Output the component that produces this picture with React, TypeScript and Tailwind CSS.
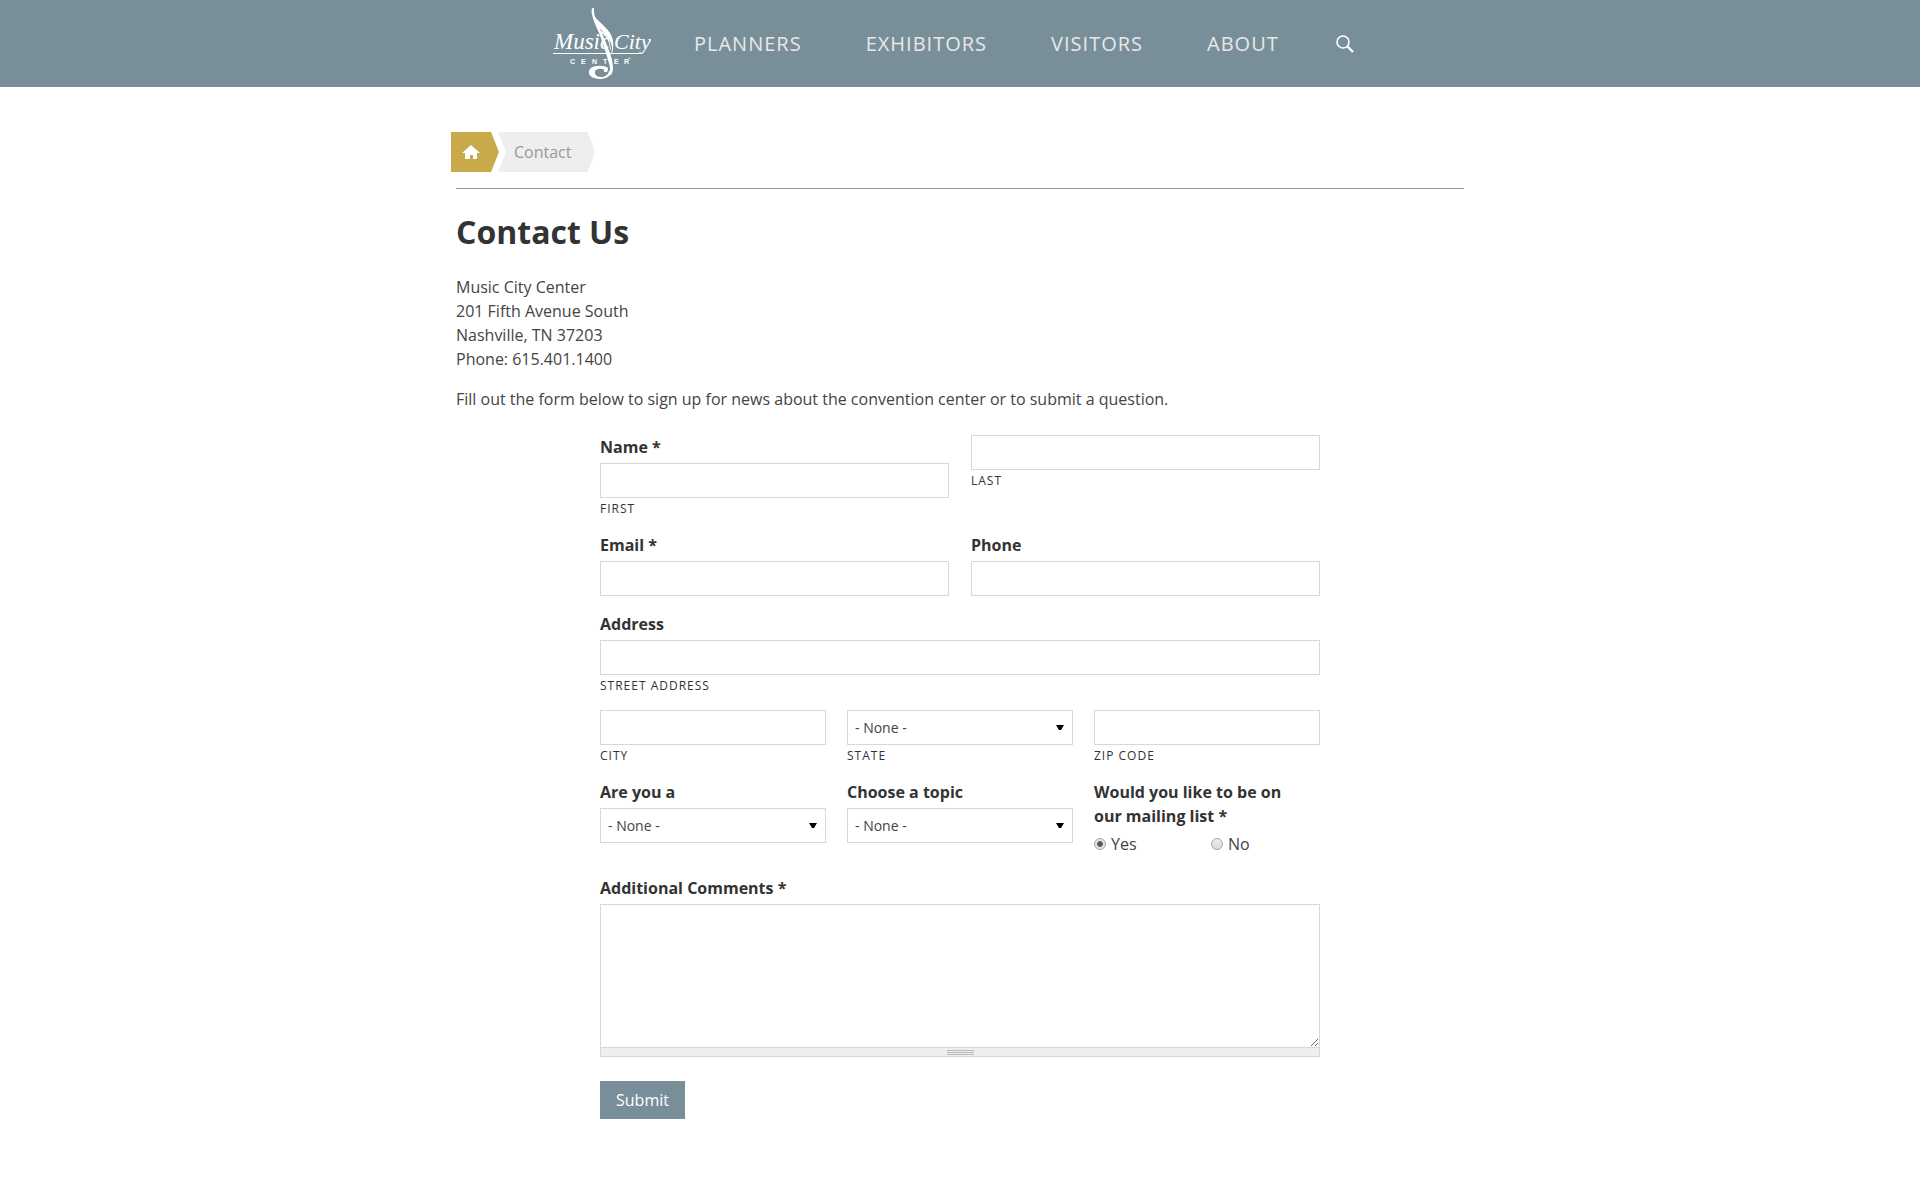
import type { ReactNode } from 'react'

interface TextFieldProps {
  id: string
  label?: string
  caption?: string
}

interface SelectFieldProps {
  id: string
  label?: string
  caption?: string
}

const NAV_LINKS = ['Planners', 'Exhibitors', 'Visitors', 'About']

const LOGO_LETTERS = [
  { letter: 'C', x: 17 },
  { letter: 'E', x: 28 },
  { letter: 'N', x: 39 },
  { letter: 'T', x: 50 },
  { letter: 'E', x: 61 },
  { letter: 'R', x: 71 },
]

function Logo() {
  return (
    <svg className="w-[98px] h-[87px]" viewBox="0 0 98 87" fill="#fff" role="img" aria-label="Music City Center">
      <text x="1" y="49" fontFamily="'Liberation Serif', serif" fontStyle="italic" fontSize="23">Music</text>
      <text x="61" y="49" fontFamily="'Liberation Serif', serif" fontStyle="italic" fontSize="22">City</text>
      <path d="M0 53.500H87" stroke="#fff" strokeWidth="1" />
      {LOGO_LETTERS.map((item) => (
        <text key={item.x} x={item.x} y="64" fontFamily="'Liberation Sans', sans-serif" fontWeight="700" fontSize="7">{item.letter}</text>
      ))}
      <text x="75" y="60" fontFamily="'Liberation Sans', sans-serif" fontSize="4">®</text>
      {/* note stem */}
      <path d="M39 8.500C37 13 42 24 46 33C50 43 53 53 55 60C57 66 58 70 56 74L58 75C61 71 60 66 59 60C57 52 53 42 49 33C45 24 40 15 41 8.500C41 7.500 40 7.500 39 8.500Z" />
      {/* note head */}
      <path d="M55 68C51 65 40 65 37 69C33 75 40 79 47 79C53 79 58 76 59 71L56 71C55 75 52 77 48 77C41 77 40 70 45 69C49 68 52 69 51 72L54 72C55 70 55 69 55 68Z" />
      {/* flag */}
      <path d="M39 11C40 18 52 25 57 33C61 39 61 48 59 54C60 45 57 39 52 34C47 29 41 23 39 11Z" />
      <path d="M47 31C52 32 56 37 57 44C58 48 58 51 60 55C56 49 57 42 53 37C51 35 49 33 47 31Z" />
    </svg>
  )
}

function Label(props: { htmlFor: string; children: ReactNode }) {
  return <label htmlFor={props.htmlFor} className="block mb-1 font-bold leading-6">{props.children}</label>
}

function Caption(props: { htmlFor: string; children: ReactNode }) {
  return <label htmlFor={props.htmlFor} className="block pt-0.5 text-xs leading-[17px] tracking-[1px] uppercase">{props.children}</label>
}

function TextField(props: TextFieldProps) {
  return (
    <div>
      {props.label && <Label htmlFor={props.id}>{props.label}</Label>}
      <input id={props.id} type="text" className="block w-full h-[35px] px-2 border border-[#d8d8d8] bg-white text-sm" />
      {props.caption && <Caption htmlFor={props.id}>{props.caption}</Caption>}
    </div>
  )
}

function SelectField(props: SelectFieldProps) {
  return (
    <div>
      {props.label && <Label htmlFor={props.id}>{props.label}</Label>}
      <div className="relative">
        <select id={props.id} className="block w-full h-[35px] px-[7px] border border-[#d8d8d8] bg-white text-sm text-[#444] appearance-none">
          <option>- None -</option>
        </select>
        <svg className="absolute right-[9px] top-[15px] w-2 h-[5px] pointer-events-none" viewBox="0 0 8 5">
          <path d="M0 0H8L5 5H3Z" fill="#000" />
        </svg>
      </div>
      {props.caption && <Caption htmlFor={props.id}>{props.caption}</Caption>}
    </div>
  )
}

function Radio(props: { label: string; checked?: boolean }) {
  return (
    <label className="flex items-center gap-[5px] w-[117px]">
      <input
        type="radio"
        name="mailing"
        defaultChecked={props.checked}
        className="w-3 h-3 rounded-full border border-[#a6a6a6] bg-linear-to-b from-[#eee] to-[#d9d9d9] appearance-none checked:bg-radial checked:from-[#5a5a5a] checked:from-35% checked:to-[#e2e2e2] checked:to-45%"
      />
      {props.label}
    </label>
  )
}

export default function App() {
  return (
    <div className="min-h-screen bg-white font-['Open_Sans',sans-serif] text-base text-[#333]">
      <header className="bg-[#788f99]">
        <div className="max-w-[1008px] h-[87px] mx-auto pl-[97px] flex items-center">
          <a href="/"><Logo /></a>
          <nav className="flex gap-16 ml-[43px]">
            {NAV_LINKS.map((name) => (
              <a key={name} href="#" className="text-xl tracking-[1px] uppercase text-[#e8e8e8]">{name}</a>
            ))}
          </nav>
          <button type="button" aria-label="Search" className="ml-[57px]">
            <svg className="w-[18px] h-[18px]" viewBox="0 0 18 18" fill="none" stroke="#fff">
              <circle cx="7" cy="7" r="6" strokeWidth="1.6" />
              <path d="M11.500 11.500L17 17" strokeWidth="2.4" />
            </svg>
          </button>
        </div>
      </header>

      <main className="max-w-[1008px] mx-auto pt-[45px] pb-20">
        {/* Breadcrumb */}
        <nav className="flex h-10 -ml-[5px]" aria-label="Breadcrumb">
          <a href="/" aria-label="Home" className="flex items-center w-12 pl-[11px] bg-[#c8aa4b] [clip-path:polygon(0_0,40px_0,100%_50%,40px_100%,0_100%)]">
            <svg className="w-[18px] h-[14px]" viewBox="0 0 18 14" fill="#fff">
              <path d="M9 0L18 8H15V14H11V10H8V14H3V8H0Z" />
            </svg>
          </a>
          <a href="#" className="flex items-center -ml-px pl-4 pr-6 text-[#999] bg-[#eee] [clip-path:polygon(0_0,calc(100%-8px)_0,100%_50%,calc(100%-8px)_100%,0_100%,8px_50%)]">Contact</a>
        </nav>
        <hr className="mt-4 border-[#999]" />

        <h1 className="mt-[19px] text-[32px] leading-12 font-bold">Contact Us</h1>
        <p className="mt-[19px] text-[#444]">
          Music City Center<br />
          201 Fifth Avenue South<br />
          Nashville, TN 37203<br />
          Phone: 615.401.1400
        </p>
        <p className="mt-4 text-[#444]">Fill out the form below to sign up for news about the convention center or to submit a question.</p>

        <form className="max-w-[720px] mx-auto mt-6" onSubmit={(e) => e.preventDefault()}>
          <div className="grid grid-cols-2 gap-x-[22px] mb-4">
            <TextField id="first" label="Name *" caption="First" />
            <TextField id="last" caption="Last" />
          </div>
          <div className="grid grid-cols-2 gap-x-[22px] mb-4">
            <TextField id="email" label="Email *" />
            <TextField id="phone" label="Phone" />
          </div>
          <div className="mb-4">
            <TextField id="street" label="Address" caption="Street Address" />
          </div>
          <div className="grid grid-cols-3 gap-x-[21px] mb-4">
            <TextField id="city" caption="City" />
            <SelectField id="state" caption="State" />
            <TextField id="zip" caption="Zip Code" />
          </div>
          <div className="grid grid-cols-3 gap-x-[21px] mb-5">
            <SelectField id="role" label="Are you a" />
            <SelectField id="topic" label="Choose a topic" />
            <fieldset>
              <legend className="mb-1 pr-6 font-bold">Would you like to be on our mailing list *</legend>
              <div className="flex text-[#444]">
                <Radio label="Yes" checked />
                <Radio label="No" />
              </div>
            </fieldset>
          </div>
          <Label htmlFor="comments">Additional Comments *</Label>
          <textarea id="comments" className="block w-full h-36 p-2 border border-[#d8d8d8] bg-white resize-y" />
          <div className="flex flex-col items-center gap-px h-[9px] pt-0.5 border border-t-0 border-[#d8d8d8] bg-[#eee]">
            <span className="w-[27px] h-px bg-[#bbb]" />
            <span className="w-[27px] h-px bg-[#bbb]" />
            <span className="w-[27px] h-px bg-[#bbb]" />
          </div>
          <button type="submit" className="mt-6 h-[38px] px-4 bg-[#788f99] text-white">Submit</button>
        </form>
      </main>
    </div>
  )
}
